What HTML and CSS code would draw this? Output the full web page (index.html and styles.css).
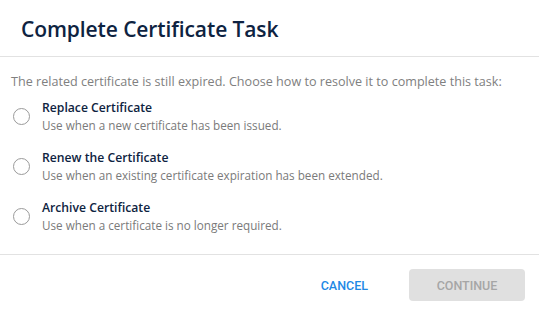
FILE: index.html
```html
<!DOCTYPE html>
<html lang="en">
<head>
    <meta charset="UTF-8">
    <meta name="viewport" content="width=device-width, initial-scale=1.0">
    <title>Complete Certificate Task</title>
    <link rel="stylesheet" href="styles.css">
</head>
<body>
    <!-- dialog -->
    <div class="dialog">
        <div class="dialog-header">
            <h2>Complete Certificate Task</h2>
        </div>
        <div class="dialog-body">
            <p class="intro">The related certificate is still expired. Choose how to resolve it to complete this task:</p>
            <label class="option">
                <input type="radio" name="resolve" value="replace">
                <span class="radio"></span>
                <span class="option-text">
                    <span class="option-title">Replace Certificate</span>
                    <span class="option-desc">Use when a new certificate has been issued.</span>
                </span>
            </label>
            <label class="option">
                <input type="radio" name="resolve" value="renew">
                <span class="radio"></span>
                <span class="option-text">
                    <span class="option-title">Renew the Certificate</span>
                    <span class="option-desc">Use when an existing certificate expiration has been extended.</span>
                </span>
            </label>
            <label class="option">
                <input type="radio" name="resolve" value="archive">
                <span class="radio"></span>
                <span class="option-text">
                    <span class="option-title">Archive Certificate</span>
                    <span class="option-desc">Use when a certificate is no longer required.</span>
                </span>
            </label>
        </div>
        <div class="dialog-footer">
            <button type="button" class="cancel-button">Cancel</button>
            <button type="button" class="continue-button" disabled>Continue</button>
        </div>
    </div>
</body>
</html>
```

FILE: styles.css
```css
body {
    margin: 0;
    background: #fff;
    font-family: "Open Sans", "Liberation Sans", sans-serif;
}
.dialog {
    width: 539px;
    height: 314px;
    display: flex;
    flex-direction: column;
}
.dialog-header {
    flex-shrink: 0;
    height: 56px;
    padding: 0 21px;
    display: flex;
    align-items: center;
    border-bottom: 1px solid #e2e2e2;
}
.dialog-header h2 {
    margin: 2px 0 0;
    font-size: 21px;
    font-weight: 600;
    color: #0e2341;
    letter-spacing: -0.1px;
}
.dialog-body {
    flex: 1;
    padding: 16px 11px 0;
}
.intro {
    margin: 0;
    font-size: 12.6px;
    line-height: 18px;
    color: #808080;
}
.option {
    display: flex;
    align-items: center;
    height: 50px;
    cursor: pointer;
}
.option input {
    display: none;
}
.radio {
    width: 15px;
    height: 15px;
    border: 1.5px solid #9a9a9a;
    border-radius: 50%;
    margin: 0 12px 0 2px;
    flex-shrink: 0;
}
.option-text {
    display: flex;
    flex-direction: column;
}
.option-title {
    font-size: 12.2px;
    font-weight: 600;
    color: #0e2341;
    line-height: 19px;
}
.option-desc {
    font-size: 11.7px;
    color: #7a7a7a;
    line-height: 17px;
}
.dialog-footer {
    flex-shrink: 0;
    height: 45px;
    border-top: 1px solid #e2e2e2;
    display: flex;
    justify-content: flex-end;
    align-items: flex-start;
    padding: 14px 14px 0;
    gap: 25px;
}
.cancel-button, .continue-button {
    font-family: Roboto, "Liberation Sans", sans-serif;
    font-size: 12.5px;
    font-weight: 500;
    text-transform: uppercase;
    border: none;
    border-radius: 4px;
    height: 32px;
    padding: 0 16px;
    cursor: pointer;
}
.cancel-button {
    background: none;
    color: #1e88e5;
}
.continue-button {
    width: 116px;
    background-color: #e0e0e0;
    color: #a6a6a6;
    cursor: default;
}
```
